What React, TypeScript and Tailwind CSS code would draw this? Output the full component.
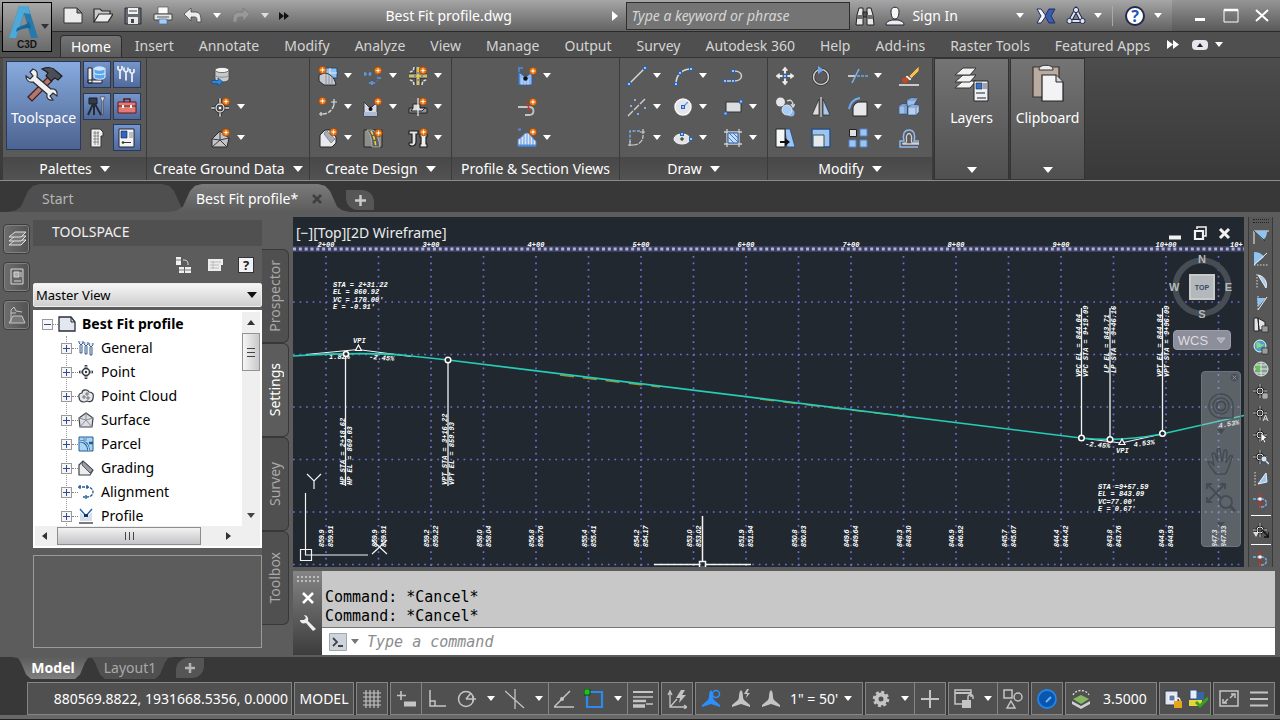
import { useState } from "react";
import type { ReactNode } from "react";

/* ---------- small shared pieces ---------- */

function Svg({ size = 20, box = 20, children }: { size?: number; box?: number; children: ReactNode }) {
    return (
        <svg width={size} height={size} viewBox={`0 0 ${box} ${box}`} fill="none" className="shrink-0" aria-hidden="true">
            {children}
        </svg>
    );
}

function Caret({ className = "text-white", wide }: { className?: string; wide?: boolean }) {
    return (
        <svg width={wide ? 10 : 8} height={wide ? 6 : 5} viewBox="0 0 8 5" preserveAspectRatio="none" className={`shrink-0 ${className}`} aria-hidden="true">
            <path d="M0 0h8L4 5z" fill="currentColor" />
        </svg>
    );
}

function Star({ x = 15, y = 4.5 }: { x?: number; y?: number }) {
    return (
        <g>
            <circle cx={x} cy={y} r="3.8" fill="#e8761a" stroke="#8a4413" strokeWidth="0.7" />
            <path d={`M${x - 2.4} ${y}h4.8M${x} ${y - 2.4}v4.8`} stroke="#ffd690" strokeWidth="1" />
            <circle cx={x} cy={y} r="1.1" fill="#fff" />
        </g>
    );
}

const grip = (x: number, y: number, k: number) => (
    <rect key={k} x={x - 1.5} y={y - 1.5} width="3" height="3" fill="#9cc4f5" stroke="#2b62b4" strokeWidth="1" />
);

/* ---------- ribbon icons ---------- */

const icons: Record<string, ReactNode> = {
    importSurvey: (
        <Svg>
            <path d="M4 4v9c0 4 14 4 14 0V4" fill="#c9c9cc" stroke="#444" strokeWidth=".8" />
            <ellipse cx="11" cy="4" rx="7" ry="2.6" fill="#f4f4f4" stroke="#555" strokeWidth=".8" />
            <path d="M4 9c1 3 13 3 14 0" stroke="#8d8d90" />
            <path d="M1 14.500h6v-2.500l5 4-5 4v-2.500H1z" fill="#2f86dd" stroke="#164a86" strokeWidth=".7" />
        </Svg>
    ),
    points: (
        <Svg>
            <path d="M9 2v4M9 15v4M1 11h4M14 11h4" stroke="#1e1e1e" strokeWidth="3" />
            <path d="M9 1.500v5M9 14.500v5M.5 11h5M13 11h5" stroke="#e8e8e8" strokeWidth="1.500" />
            <circle cx="9" cy="11" r="4" fill="#5d5d5d" stroke="#1e1e1e" strokeWidth="2.600" />
            <circle cx="9" cy="11" r="4" stroke="#e8e8e8" strokeWidth="1.300" />
            <circle cx="9" cy="11" r="1.200" fill="#fff" />
            <Star />
        </Svg>
    ),
    surfaces: (
        <Svg>
            <path d="M1 11 9 3l9 7-2 9H1z" fill="#c3c4ca" stroke="#2a2a2a" />
            <path d="M9 3v9M1 19l8-7 7 7M9 12l9-2M9 12l-8-1" stroke="#3a3a3a" />
            <Star />
        </Svg>
    ),
    parcel: (
        <Svg>
            <path d="M3 2h16v10H3z" fill="#8fc0ef" stroke="#24476f" />
            <path d="M12 2v10M12 7h7" stroke="#dbeeff" />
            <path d="M1 9l5-2c5 0 11 4 12 12H6l-5-4z" fill="#c7c9d0" stroke="#2a2a2a" />
            <path d="M8 8v11M11 9v10M14 11v8" stroke="#8c94a8" />
            <Star x={4.5} y={4} />
        </Svg>
    ),
    alignment: (
        <Svg>
            <path d="M1 8h9" stroke="#5f9be6" strokeWidth="1.500" strokeDasharray="3 1.500" />
            <path d="M2 6v4M7 6v4M14 12h4M6 17h6M9 15v4" stroke="#5f9be6" strokeWidth="1.500" />
            <path d="M12 8c4 0 4 9-1 9" stroke="#4a7fc6" strokeDasharray="2 1.500" />
            <Star />
        </Svg>
    ),
    intersection: (
        <Svg>
            <path d="M10 1v18M1 10h18" stroke="#222" strokeWidth="5" />
            <path d="M10 1v18M1 10h18" stroke="#8b8b8b" strokeWidth="4" />
            <path d="M10 1v18M1 10h18" stroke="#f1d12e" strokeWidth="1.700" strokeDasharray="5 2" />
            <path d="M6 1c0 3-2 5-5 5M14 1c0 3 2 5 5 5M6 19c0-3-2-5-5-5M14 19c0-3 2-5 5-5" stroke="#ddd" strokeWidth="1.500" strokeDasharray="3 1" />
            <Star />
        </Svg>
    ),
    profileCreate: (
        <Svg>
            <path d="M1 17h4M3 15v4M16 2v6M13 5h6" stroke="#ddd" strokeWidth="1.200" />
            <path d="M5 17c6 0 9-4 11-9" stroke="#cfcfcf" strokeWidth="1.500" strokeDasharray="4 1.500" />
            <Star x={4.5} y={4} />
        </Svg>
    ),
    assemblyCorridor: (
        <Svg>
            <path d="M1 5l5 5h3l5-5v14H1z" fill="#d4d9e6" stroke="#3c3c3c" />
            <path d="M1 15h13v4H1z" fill="#aebbd8" />
            <circle cx="7.5" cy="12" r="2" fill="#111" />
            <Star />
        </Svg>
    ),
    assembly: (
        <Svg>
            <path d="M1 11h18v5H1z" fill="#8e949e" stroke="#222" />
            <path d="M5 7h7v4h5l-3 3H3l2-3z" fill="#d9d9dc" stroke="#222" />
            <path d="M10 1v18" stroke="#eee" strokeWidth="1.200" />
            <Star />
        </Svg>
    ),
    grading: (
        <Svg>
            <path d="M2 7l5-5h5l6 7v6l-4 4H2z" fill="#e9eaed" stroke="#222" />
            <path d="M8 2l9 9-4 4-7-9z" fill="#a9adb6" stroke="#6e717a" strokeWidth=".7" />
            <Star x={15.5} y={4} />
        </Svg>
    ),
    corridor: (
        <Svg>
            <path d="M1 2h18v17H1z" fill="#8d8f8a" stroke="#222" />
            <path d="M4 2h6c4 4 6 10 7 17H9C9 12 8 7 4 2z" fill="#5c5d60" stroke="#ccc" strokeWidth=".7" />
            <path d="M8 3c3 5 4 10 5 16" stroke="#f2d22c" strokeWidth="1.600" strokeDasharray="4 1.500" />
            <Star x={15.5} y={5} />
        </Svg>
    ),
    pipes: (
        <Svg>
            <path d="M1 3h9v3H8v8c0 5-7 5-7 2v-1h3V6H1z" fill="#e2e3e6" stroke="#1f1f1f" strokeWidth="1.200" />
            <path d="M12 6h7v3h-1v7h1v3h-7v-3h1V9h-1z" fill="#eee" stroke="#1f1f1f" strokeWidth="1.200" />
            <Star x={15.5} y={4} />
        </Svg>
    ),
    profileView: (
        <Svg>
            <path d="M2 1v18M2 2h4" stroke="#4b8ee0" strokeWidth="1.500" />
            <path d="M2 6l5 4h3l5-4v13H2z" fill="#8db7ee" stroke="#2b5da4" />
            <path d="M5 12v7M8 14v5M11 13v6" stroke="#d5e6fb" strokeWidth=".8" />
            <circle cx="8.500" cy="12.500" r="2.200" fill="#111" />
            <Star x={16} y={5} />
        </Svg>
    ),
    sampleLines: (
        <Svg>
            <path d="M1 10h11c6 0 6 8 0 8H8" stroke="#c4c4c4" strokeWidth="1.800" />
            <path d="M10 6l3 8" stroke="#d1322a" strokeWidth="1.600" />
            <Star x={16} y={5} />
        </Svg>
    ),
    sectionViews: (
        <Svg>
            <path d="M1 18V11c4 0 5-6 9-6s5 6 9 8v5z" fill="#dbe7f8" stroke="#4b82cc" />
            <path d="M4 10v8M7 7v11M10 6v12M13 7v11M16 10v8" stroke="#5c95df" />
            <path d="M1 17.500h18M1 1.500h3" stroke="#4b8ee0" strokeWidth="2" />
            <Star x={16} y={4} />
        </Svg>
    ),
    line: <Svg><path d="M2 18 18 2" stroke="#d8d8d8" strokeWidth="1.400" />{[[2, 18], [18, 2]].map((p, i) => grip(p[0], p[1], i))}</Svg>,
    arc: <Svg><path d="M3 18C3 9 9 3 18 3" stroke="#d8d8d8" strokeWidth="1.500" />{[[3, 18], [7, 7], [18, 3]].map((p, i) => grip(p[0], p[1], i))}</Svg>,
    polyline: <Svg><path d="M2 15h9c10 0 10-10 0-10" stroke="#d0d0d0" strokeWidth="1.500" />{[[2, 15], [10, 15], [10, 5]].map((p, i) => grip(p[0], p[1], i))}</Svg>,
    construction: (
        <Svg>
            <path d="M1 19 19 1" stroke="#d0d0d0" strokeWidth="1.400" strokeDasharray="7 1.500" />
            <path d="M7 2h2v2H7zM3 8h2v2H3zM17 10h2v2h-2zM10 16h2v2h-2z" fill="#7fb0ee" />
        </Svg>
    ),
    circle: (
        <Svg>
            <circle cx="10" cy="10" r="8" fill="#e3e5ea" stroke="#f8f8f8" strokeWidth="1.500" />
            <path d="M10 10l5-5" stroke="#5d98e8" strokeWidth="1.200" />
            {grip(10, 10, 0)}
        </Svg>
    ),
    rectangle: <Svg><path d="M3 5h15v10H3z" fill="#dcdde1" stroke="#333" />{[[2.500, 16.500], [18, 4.500]].map((p, i) => grip(p[0], p[1], i))}</Svg>,
    fillet: (
        <Svg>
            <path d="M3 14V3h11" stroke="#79aee9" strokeWidth="1.400" strokeDasharray="3 1.500" />
            <path d="M16 1v7M13 4h6M3 13v6M1 17h6M6 17c6 0 10-4 10-9" stroke="#d0d0d0" strokeWidth="1.200" strokeDasharray="5 1" />
        </Svg>
    ),
    ellipse: <Svg><ellipse cx="9" cy="11" rx="8" ry="5" fill="#e3e3e6" stroke="#fafafa" /><path d="M9 9v4M7 11h4" stroke="#222" />{[[9, 6], [18, 11]].map((p, i) => grip(p[0], p[1], i))}</Svg>,
    hatch: (
        <Svg>
            <path d="M4 1v18M1 4h18M16 1v18M1 16h18" stroke="#d0d0d0" strokeWidth="1.300" />
            <path d="M5 5h10v10H5z" fill="#c4dcf9" stroke="#2b5ca3" />
            <path d="M5 9l6 6M6 5l9 9M10 5l5 5" stroke="#3f79cf" />
        </Svg>
    ),
    move: (
        <Svg>
            <path d="M10 0l4 5h-2.500v3h-3V5H6zM10 20l4-5h-2.500v-3h-3v3H6zM0 10l5-4v2.500h3v3H5V14zM20 10l-5-4v2.500h-3v3h3V14z" fill="#ececec" stroke="#444" strokeWidth=".7" />
            {grip(10, 10, 0)}
        </Svg>
    ),
    rotate: <Svg><circle cx="10" cy="11" r="7.500" stroke="#2e2e2e" strokeWidth="3" /><circle cx="10" cy="11" r="7.500" stroke="#c9c9c9" strokeWidth="1.600" /><path d="M7 0l6 4-6 4z" fill="#6fa8ee" /></Svg>,
    trim: <Svg><path d="M0 10h7" stroke="#e2e2e2" strokeWidth="1.600" /><path d="M9 10h11" stroke="#6fa8ee" strokeWidth="1.300" strokeDasharray="3 1" /><path d="M4 17 11 3" stroke="#7db1ef" strokeWidth="1.600" /></Svg>,
    erase: (
        <Svg>
            <path d="M0 19h20" stroke="#f0f0f0" strokeWidth="1.500" />
            <path d="M10 10 20 0v5l-8 8z" fill="#f0c15a" stroke="#6b4a14" strokeWidth=".7" />
            <path d="M8 9l5 4-2 2-5-4z" fill="#ededed" stroke="#444" strokeWidth=".7" />
            <path d="M3 13c2-2 5-2 6 0s-1 4-3 4-3-2-3-4z" fill="#c8471c" />
        </Svg>
    ),
    copy: (
        <Svg>
            <circle cx="5.500" cy="5" r="4.500" fill="#e3e5ea" />
            <path d="M12 4c4-2 6 0 6 5M16 7l2 3 2-3" stroke="#d8d8d8" strokeWidth="1.300" />
            <circle cx="16" cy="16" r="3.500" fill="#8db9ef" />
            <circle cx="12" cy="13" r="5" fill="#a9ccf5" stroke="#e8f1fd" strokeWidth=".8" />
        </Svg>
    ),
    mirror: <Svg><path d="M8 2v16H1z" fill="#dcdde1" stroke="#333" strokeWidth=".8" /><path d="M12 2v16h7z" fill="#a7c9f2" stroke="#333" strokeWidth=".8" /><path d="M10 0v20" stroke="#eee" /></Svg>,
    corner: <Svg><path d="M5 19v-7c0-4 3-7 7-7h7v14z" fill="#e6e8ec" stroke="#222" /><path d="M1 12C2 6 6 2 12 1" stroke="#72aaf0" strokeWidth="2" /></Svg>,
    explode: (
        <Svg>
            <path d="M8 3l4-2h7l-3 5-1 3H8zM0 9l3-2h5v10H0z" fill="#9fc0ea" stroke="#1f4a80" strokeWidth=".6" />
            <path d="M9 10l3-2h8v7l-3 3H9z" fill="#b9d0ee" stroke="#1f4a80" strokeWidth=".6" />
            <path d="M9 10h8l3-2M17 10v8M0 9h6l2-2M6 9v8M8 3h7l4-2" stroke="#5c7fb0" strokeWidth=".8" />
        </Svg>
    ),
    stretch: (
        <Svg>
            <path d="M10 1h5l5 18h-8z" fill="#9dc4f3" stroke="#1f4a80" strokeWidth=".8" />
            <path d="M1 1h9v18H1z" fill="#f4f5f7" stroke="#222" />
            <path d="M5 14h7" stroke="#111" strokeWidth="2" /><path d="M10 10l5 4-5 4z" fill="#111" />
        </Svg>
    ),
    scale: <Svg><path d="M1 1h18v18H1z" fill="#9fc3ef" stroke="#284f84" strokeWidth="1.400" /><path d="M2 7h11v12H2z" fill="#e7e9ed" stroke="#355" /></Svg>,
    array: (
        <Svg>
            <path d="M1.500 1.500h7v7h-7z" fill="#e0e0e3" stroke="#222" />
            <path d="M12 1h7v7h-7zM1 12h7v7H1zM12 12h7v7h-7z" fill="#9cc5f5" stroke="#4d86cb" />
        </Svg>
    ),
    offset: (
        <Svg>
            <path d="M19 19H1v-6h4c-1-3-1-5 0-8 2-4 8-4 10 0 1 3 1 5 0 8h5" stroke="#8db9f0" strokeWidth="1.500" />
            <path d="M20 16H4c-1-1 1-1 3-1 2-3-1-5 1-8 1-2 3-2 4 0 2 3-1 5 1 8h7" stroke="#d0d0d0" strokeWidth="1.300" />
        </Svg>
    ),
};

/* ---------- title bar ---------- */

function TitleBar() {
    const qat = [
        { name: "New", art: <path d="M1 4h13l5 5v10H1z M14 4v5h5" fill="#ececec" stroke="#333" transform="translate(0 -2)" /> },
        { name: "Open", art: <><path d="M1 16V3h6l2 2h8v3" fill="#c9c9c9" stroke="#2b2b2b" strokeWidth="1.200" /><path d="M1 16 6 8h14l-5 8z" fill="#ececec" stroke="#2b2b2b" strokeWidth="1.200" /></> },
        { name: "Save", art: <><path d="M2 2h16v16H2z" fill="#66696f" stroke="#2d3036" /><path d="M5 2h10v6H5z" fill="#f2f2f2" /><path d="M5 11h10v7H5z" fill="#e8e8e8" /><path d="M8 13h3v4H8z" fill="#444" /><path d="M6 5h8" stroke="#444" /></> },
        { name: "Plot", art: <><path d="M5 1h10v7H5z" fill="#fafafa" stroke="#555" strokeWidth=".7" /><path d="M1 8h18v6H1z" fill="#e4e4e4" stroke="#444" /><path d="M6 13h8v5H6z" fill="#a8cdf5" stroke="#3d6eab" strokeWidth=".7" /><path d="M4 11h12" stroke="#555" /></> },
    ];
    return (
        <header className="flex h-8 items-center border-b border-[#2a2a2a] bg-linear-to-b from-[#a6a6a6] to-[#636363] pl-[63px]">
            <div className="flex items-center gap-[10px]">
                {qat.map((q) => (
                    <button key={q.name} type="button" aria-label={q.name}>
                        <Svg>{q.art}</Svg>
                    </button>
                ))}
                <button type="button" aria-label="Undo">
                    <Svg><path d="M1 8l7-6v4h4c5 0 6 3 6 10h-4c0-4 0-5-3-5H8v4z" fill="#ececec" stroke="#444" strokeWidth=".8" /></Svg>
                </button>
                <button type="button" aria-label="Undo history"><Caret /></button>
                <button type="button" aria-label="Redo">
                    <Svg><path d="M19 8l-7-6v4H8c-5 0-6 3-6 10h4c0-4 0-5 3-5h3v4z" fill="#989898" stroke="#777" strokeWidth=".8" /></Svg>
                </button>
                <button type="button" aria-label="Redo history"><Caret className="text-[#ddd]" /></button>
                <button type="button" aria-label="Customize toolbar">
                    <svg width="10" height="8" viewBox="0 0 10 8"><path d="M0 0l5 4-5 4zM5 0l5 4-5 4z" fill="#111" /></svg>
                </button>
            </div>
            <h1 className="min-w-0 flex-1 truncate text-center text-white">Best Fit profile.dwg</h1>
            <svg width="6" height="10" viewBox="0 0 6 10" className="mr-2 ml-1" aria-hidden="true"><path d="M0 0l6 5-6 5z" fill="#fff" /></svg>
            <input
                type="text"
                aria-label="Search help"
                placeholder="Type a keyword or phrase"
                className="h-7 w-56 border border-[#2e2e2e] bg-[#747474] px-1 italic text-white placeholder:text-[#d6d6d6]"
            />
            <button type="button" aria-label="Search" className="ml-[5px]">
                <Svg>
                    <path d="M2 9 4 2h4v17H1zM18 9l-2-7h-4v17h7z" fill="#e8e8e8" stroke="#222" />
                    <path d="M8 6h4v5H8z" fill="#555" stroke="#222" /><path d="M2 9h6v4H2zM12 9h6v4h-6z" fill="#6c7077" />
                </Svg>
            </button>
            <button type="button" className="ml-[10px] flex items-center gap-[7px] text-white">
                <Svg>
                    <path d="M1 19c0-4 4-4 6-5h6c2 1 6 1 6 5z" fill="#ededed" stroke="#23283a" />
                    <path d="M6 5c0-5 8-5 8 0 0 4-1 8-4 8s-4-4-4-8z" fill="#f6f6f6" stroke="#23283a" />
                </Svg>
                Sign In
                <span className="ml-[51px]"><Caret /></span>
            </button>
            <button type="button" aria-label="Exchange Apps" className="ml-3">
                <Svg>
                    <path d="M1 3h4l5 7-5 7H1l4-7z" fill="#f4f6fb" stroke="#1f2f66" />
                    <path d="M19 3h-6l-4 7 4 7h6l-4-7z" fill="#3a5cae" stroke="#1f2f66" />
                </Svg>
            </button>
            <button type="button" aria-label="Autodesk 360" className="ml-[10px] flex items-center gap-2">
                <Svg>
                    <path d="M10 4 4 15h12z" stroke="#20294e" strokeWidth="4" /><path d="M10 4 4 15h12z" stroke="#dfe4f2" strokeWidth="2" />
                    {[[10, 4], [3.500, 15], [16.500, 15]].map(([x, y]) => <circle key={x} cx={x} cy={y} r="2.600" fill="#dfe4f2" stroke="#20294e" />)}
                </Svg>
                <Caret />
            </button>
            <span className="ml-[10px] h-5 w-px bg-[#a9a9a9]" />
            <button type="button" aria-label="Help" className="ml-3 flex items-center gap-[9px]">
                <span className="flex size-5 items-center justify-center rounded-full border-2 border-[#22294a] bg-white text-base leading-4 font-bold text-[#2457b8]">?</span>
                <Caret />
            </button>
            <div className="ml-[10px] flex h-full items-center gap-[13px] bg-[#00000018] pr-[9px] pl-[19px]">
                <button type="button" aria-label="Minimize"><Svg size={18} box={18}><path d="M4 12.500h10" stroke="#fff" strokeWidth="3" /></Svg></button>
                <button type="button" aria-label="Maximize"><Svg size={18} box={18}><path d="M2 2.500h14V15H2z" stroke="#fff" /><path d="M2 3h14" stroke="#fff" strokeWidth="2.500" /></Svg></button>
                <button type="button" aria-label="Close"><Svg size={18} box={18}><path d="M3 3l12 11M15 3L3 14" stroke="#fff" strokeWidth="2" /></Svg></button>
            </div>
        </header>
    );
}

function AppButton() {
    return (
        <button type="button" aria-label="Application menu" className="absolute top-[2px] left-[2px] z-10 size-[50px] border border-black bg-linear-to-b from-[#a8a8a8] to-[#6a6a6a]">
            <svg width="34" height="34" viewBox="0 0 34 34" className="absolute top-[2px] left-1" aria-hidden="true">
                <path d="M12 1h9l10 32h-7l-3-10-9 1-3 9H2z" fill="#2779ac" />
                <path d="M12 1h9l2 8-6-1-8 25H2z" fill="#4fa9d6" />
                <path d="M17 9l3 10-7 2z" fill="#8c8c8c" />
                <path d="M10 23c5-1 9-3 12-6l2 6c-4 0-9 0-15 4z" fill="#17669b" />
            </svg>
            <span className="absolute top-[21px] right-[2px] flex"><Caret className="text-[#333]" /></span>
            <span className="absolute bottom-0 left-0 w-full text-center font-['Liberation_Sans'] text-[10px] leading-3 font-bold text-[#151515]">C3D</span>
        </button>
    );
}

/* ---------- ribbon ---------- */

const ribbonTabs = ["Home", "Insert", "Annotate", "Modify", "Analyze", "View", "Manage", "Output", "Survey", "Autodesk 360", "Help", "Add-ins", "Raster Tools", "Featured Apps"];

type Tool = { icon: string; label: string; menu?: boolean };
type Panel = { title: string; menu?: boolean; width: string; grid: string; tools: Tool[] };

const panels: Panel[] = [
    {
        title: "Create Ground Data", menu: true, width: "w-[163px]", grid: "grid-cols-[35px]",
        tools: [
            { icon: "importSurvey", label: "Import Survey Data" },
            { icon: "points", label: "Points", menu: true },
            { icon: "surfaces", label: "Surfaces", menu: true },
        ],
    },
    {
        title: "Create Design", menu: true, width: "w-[142px]", grid: "grid-cols-[45px_45px_36px]",
        tools: [
            { icon: "parcel", label: "Parcel", menu: true },
            { icon: "alignment", label: "Alignment", menu: true },
            { icon: "intersection", label: "Intersections", menu: true },
            { icon: "profileCreate", label: "Feature Line", menu: true },
            { icon: "assemblyCorridor", label: "Profile", menu: true },
            { icon: "assembly", label: "Assembly", menu: true },
            { icon: "grading", label: "Grading", menu: true },
            { icon: "corridor", label: "Corridor" },
            { icon: "pipes", label: "Pipe Network", menu: true },
        ],
    },
    {
        title: "Profile & Section Views", width: "w-[168px]", grid: "grid-cols-[38px]",
        tools: [
            { icon: "profileView", label: "Profile View", menu: true },
            { icon: "sampleLines", label: "Sample Lines" },
            { icon: "sectionViews", label: "Section Views", menu: true },
        ],
    },
    {
        title: "Draw", menu: true, width: "w-[148px]", grid: "grid-cols-[46px_50px_38px]",
        tools: [
            { icon: "line", label: "Line", menu: true },
            { icon: "arc", label: "Arc", menu: true },
            { icon: "polyline", label: "Polyline" },
            { icon: "construction", label: "Construction Line", menu: true },
            { icon: "circle", label: "Circle", menu: true },
            { icon: "rectangle", label: "Rectangle", menu: true },
            { icon: "fillet", label: "Curve", menu: true },
            { icon: "ellipse", label: "Ellipse", menu: true },
            { icon: "hatch", label: "Hatch", menu: true },
        ],
    },
    {
        title: "Modify", menu: true, width: "w-[165px]", grid: "grid-cols-[36px_37px_51px_26px]",
        tools: [
            { icon: "move", label: "Move" },
            { icon: "rotate", label: "Rotate" },
            { icon: "trim", label: "Trim", menu: true },
            { icon: "erase", label: "Erase" },
            { icon: "copy", label: "Copy" },
            { icon: "mirror", label: "Mirror" },
            { icon: "corner", label: "Fillet", menu: true },
            { icon: "explode", label: "Explode" },
            { icon: "stretch", label: "Stretch" },
            { icon: "scale", label: "Scale" },
            { icon: "array", label: "Array", menu: true },
            { icon: "offset", label: "Offset" },
        ],
    },
];

function PanelTitle({ title, menu }: { title: string; menu?: boolean }) {
    return (
        <button type="button" className="flex h-[23px] w-full items-center justify-center gap-2 bg-linear-to-b from-[#484848] to-[#525252] whitespace-nowrap text-white">
            {title}
            {menu && <Caret wide />}
        </button>
    );
}

function PalettesPanel() {
    const small: { label: string; on: boolean; art: ReactNode }[] = [
        { label: "Prospector", on: true, art: <><path d="M1 3h4v15H1zM1 15h14v3H1z" fill="#eee" stroke="#223" /><path d="M7 3v9c0 3 11 3 11 0V3" fill="#5ba6ee" stroke="#e8f3ff" /><ellipse cx="12.500" cy="3.500" rx="5.500" ry="2.200" fill="#cfe6ff" /><path d="M7 8c1 2 10 2 11 0" stroke="#e8f3ff" /></> },
        { label: "Settings", on: true, art: <>{[0, 6, 12].map((x) => <path key={x} d={`M${x + 1} ${1 + x / 4}v3l1 1h2l1-1v-3M${x + 3} ${5 + x / 4}v9`} stroke="#f2f2f2" strokeWidth="1.700" />)}</> },
        { label: "Survey", on: true, art: <><path d="M2 2h8v6H2z" fill="#333b48" stroke="#1a1e26" /><path d="M6 8 1 19M7 8v11M8 8l6 11" stroke="#252b36" strokeWidth="2" /><path d="M13 1h5l-2 4v14h-1V5z" fill="#e6e6e6" stroke="#333" strokeWidth=".6" /></> },
        { label: "Toolbox", on: true, art: <><path d="M7 6V3h6v3" stroke="#5c1a1a" strokeWidth="1.500" /><path d="M1 6h18v11H1z" fill="#e07b78" stroke="#5c1a1a" /><path d="M1 10h18" stroke="#5c1a1a" /><path d="M5 9h2v3H5zM13 9h2v3h-2z" fill="#fff" /></> },
        { label: "Panorama", on: false, art: <><path d="M4 1h9l3 3v4h-2v11H4z" fill="#efefef" stroke="#333" /><path d="M6 5h6M6 8h6M6 11h6M6 14h6M8 3v14M11 3v14" stroke="#777" strokeWidth=".8" /></> },
        { label: "Properties", on: true, art: <><path d="M2 1h15v18H2z" fill="#f4f4f4" stroke="#1c2436" /><path d="M4 3h6v7H4z" fill="#2d66c4" stroke="#1c2436" strokeWidth=".6" /><path d="M13 4v6M15 4v6" stroke="#888" /><path d="M5 14.500h9" stroke="#333" /><circle cx="6" cy="14.500" r="1.300" fill="#333" /></> },
    ];
    return (
        <section className="flex w-36 shrink-0 flex-col border-r border-[#3b3b3b]">
            <div className="flex flex-1 gap-[2px] px-[3px] pt-[3px]">
                <button type="button" className="flex h-[89px] w-[75px] flex-col items-center border border-[#27395f] bg-linear-to-b from-[#88abdf] to-[#4c6491] pt-1 text-white">
                    <svg width="40" height="36" viewBox="0 0 40 36" aria-hidden="true">
                        <path d="M4 31 24 11l4 4L8 35z" fill="#b4766a" stroke="#3a1d1a" strokeWidth="1.200" />
                        <path d="M18 3c5-2 11-2 14 2l6 5-4 4-3-2-4 3-5-5 2-3c-2-2-4-3-6-4z" fill="#4b4e55" stroke="#1b1d22" strokeWidth="1.200" />
                        <path d="M9 3c4 1 5 4 4 8l14 12c4-1 7 2 6 7l-4-3-3 3 3 4c-4 1-7-2-6-6L9 16c-4 1-7-2-7-6l4 3 3-3-3-4z" fill="#f1f1f1" stroke="#2a2d33" strokeWidth="1.200" />
                    </svg>
                    <span className="mt-[6px]">Toolspace</span>
                </button>
                <div className="grid h-[90px] grid-cols-2 content-between gap-x-[2px]">
                    {small.map((s) => (
                        <button
                            key={s.label}
                            type="button"
                            aria-label={s.label}
                            className={`flex h-[27px] w-7 items-center justify-center ${s.on ? "border border-[#27395f] bg-linear-to-b from-[#7496cc] to-[#506a9a]" : ""}`}
                        >
                            <Svg>{s.art}</Svg>
                        </button>
                    ))}
                </div>
            </div>
            <PanelTitle title="Palettes" menu />
        </section>
    );
}

function CollapsedPanel({ label, children }: { label: string; children: ReactNode }) {
    return (
        <button type="button" className="ml-px flex w-[75px] shrink-0 flex-col items-center border border-[#333] bg-linear-to-b from-[#747474] to-[#505050] pt-1 pb-[6px] text-white">
            <svg width="40" height="40" viewBox="0 0 40 40" aria-hidden="true">{children}</svg>
            <span className="mt-[5px]">{label}</span>
            <span className="mt-auto flex"><Caret wide /></span>
        </button>
    );
}

function Ribbon() {
    const [tab, setTab] = useState<string>("Home");
    return (
        <div className="border-b border-[#8b8b8b]">
            <nav className="flex h-[25px] items-end gap-px bg-[#4f4f4f] pl-[60px]">
                {ribbonTabs.map((t) => (
                    <button
                        key={t}
                        type="button"
                        onClick={() => setTab(t)}
                        className={`h-[22px] whitespace-nowrap ${t === tab ? "rounded-t-sm border border-b-0 border-[#2c2c2c] bg-linear-to-b from-[#747474] to-[#5b5b5b] px-[10px] leading-[18px] text-white" : "px-3 leading-5 text-[#d4d4d4]"}`}
                    >
                        {t}
                    </button>
                ))}
                <button type="button" aria-label="More tabs" className="mb-2 ml-1">
                    <svg width="12" height="9" viewBox="0 0 12 9"><path d="M0 0l6 4.500L0 9zM6 0l6 4.500L6 9z" fill="#fff" /></svg>
                </button>
                <button type="button" aria-label="Minimize ribbon" className="mb-[7px] ml-3 flex h-[10px] w-4 items-center justify-center rounded-sm bg-[#e6e6ec]">
                    <svg width="6" height="4" viewBox="0 0 6 4"><path d="M0 4h6L3 0z" fill="#222" /></svg>
                </button>
                <button type="button" aria-label="Ribbon options" className="mb-[10px] ml-[6px] flex"><Caret /></button>
            </nav>
            <div className="flex h-[123px] border-t border-[#333] bg-linear-to-b from-[#4c4c4c] to-[#393939] pl-[3px]">
                <div className="flex bg-[#5a5a5a]">
                    <PalettesPanel />
                    {panels.map((p) => (
                        <section key={p.title} className={`flex shrink-0 flex-col border-r border-[#3b3b3b] ${p.width}`}>
                            <div className={`grid flex-1 auto-rows-[31px] justify-center pt-[2px] ${p.grid}`}>
                                {p.tools.map((t) => (
                                    <button key={t.label} type="button" aria-label={t.label} className="flex items-center gap-[6px]">
                                        {icons[t.icon]}
                                        {t.menu && <Caret className="text-white" />}
                                    </button>
                                ))}
                            </div>
                            <PanelTitle title={p.title} menu={p.menu} />
                        </section>
                    ))}
                </div>
                <CollapsedPanel label="Layers">
                    {[18, 12, 5].map((y) => <path key={y} d={`M3 ${y + 7}l8-7h13l-6 7z`} fill="#f2f2f2" stroke="#333" />)}
                    <path d="M22 18h14v20H22z" fill="#eef1f6" stroke="#222" />
                    <path d="M24 20h6v6h-6z" fill="#3572c8" stroke="#223" strokeWidth=".6" />
                    <path d="M32 20v6M34 20v6" stroke="#556" /><path d="M24 30h9M25 35h9" stroke="#222" />
                </CollapsedPanel>
                <CollapsedPanel label="Clipboard">
                    <path d="M5 4h26v30H5z" fill="#b9aba0" stroke="#3c332c" strokeWidth="1.200" />
                    <path d="M11 6c0-5 14-5 14 0v1H11z" fill="#ececf0" stroke="#333" />
                    <path d="M14 12h14l7 7v19H14z" fill="#f3f3f6" stroke="#222" strokeWidth="1.200" /><path d="M28 12v7h7" fill="#d3d3da" stroke="#222" />
                </CollapsedPanel>
            </div>
        </div>
    );
}

function FileTabs() {
    const shape = "[clip-path:polygon(0_100%,8px_94%,13px_80%,20px_25%,25px_6%,32px_0,calc(100%_-_32px)_0,calc(100%_-_25px)_6%,calc(100%_-_20px)_25%,calc(100%_-_13px)_80%,calc(100%_-_8px)_94%,100%_100%)]";
    return (
        <div className="flex h-8 items-end border-b border-[#5c5c5c] bg-[#383838] pl-2">
            <button type="button" className={`-mr-6 h-7 w-[186px] bg-[#4f4f4f] pt-[2px] pl-[34px] text-left text-[#b5b5b5] ${shape}`}>Start</button>
            <div className={`flex h-7 w-[180px] items-center bg-linear-to-b from-[#7b7b7b] to-[#5c5c5c] pt-[2px] pl-[26px] text-white ${shape}`}>
                <button type="button" className="whitespace-nowrap">Best Fit profile*</button>
                <button type="button" aria-label="Close drawing" className="ml-[14px]">
                    <Svg size={10} box={10}><path d="M1 1l8 8M9 1L1 9" stroke="#3f3f3f" strokeWidth="2.500" /></Svg>
                </button>
            </div>
            <button type="button" aria-label="New drawing" className="mb-[2px] -ml-1 flex h-5 w-7 items-center justify-center rounded-tr-xl rounded-bl-xl bg-[#565656]">
                <Svg size={11} box={11}><path d="M5.500 0v11M0 5.500h11" stroke="#c9c9c9" strokeWidth="2.500" /></Svg>
            </button>
        </div>
    );
}

/* ---------- toolspace ---------- */

const treeItems: { label: string; art: ReactNode }[] = [
    { label: "General", art: <>{[0, 5, 10].map((x) => <path key={x} d={`M${x + 1} ${1 + x / 5}v2l2 2 2-2V${1 + x / 5}M${x + 2} ${5 + x / 5}v8h2V${5 + x / 5}`} fill="#dfe9f5" stroke="#2a4e7e" strokeWidth=".9" />)}</> },
    { label: "Point", art: <><path d="M8 1v14M1 8h14" stroke="#333a44" strokeWidth="2.600" /><path d="M8 2v12M2 8h12" stroke="#fff" /><circle cx="8" cy="8" r="3.500" fill="#fff" stroke="#333a44" strokeWidth="1.500" /><circle cx="8" cy="8" r="1.200" fill="#333a44" /></> },
    { label: "Point Cloud", art: <><path d="M1 9c-1-3 2-4 3-4 0-4 6-4 7-1 4 0 5 3 4 6 0 4-4 4-6 3-3 2-8 1-8-4z" fill="#e5e7eb" stroke="#3c4048" strokeWidth="1.200" /><path d="M5 8h2v2H5zM8 5h2v2H8zM9 9h2v2H9z" fill="#fff" stroke="#3c4048" strokeWidth=".7" /></> },
    { label: "Surface", art: <><path d="M1 6l7-5 7 5-1 9H2z" fill="#dcdee3" stroke="#41444b" strokeWidth="1.200" /><path d="M8 1v7M8 8l7-2M8 8L1 6M8 8l-6 7M8 8l6 7" stroke="#8a8e97" /></> },
    { label: "Parcel", art: <><path d="M1 1h14v14H1z" fill="#a9d4f5" stroke="#1e5e94" /><path d="M1 5c6 0 9 3 10 10M7 1v4M15 7h-4" stroke="#1e5e94" strokeWidth="2.500" /><path d="M1 5c6 0 9 3 10 10M7 1v4" stroke="#e8f5ff" /></> },
    { label: "Grading", art: <><path d="M1 5l4-4 10 9-3 5H1z" fill="#ededf0" stroke="#3c4048" strokeWidth="1.200" /><path d="M5 1l10 9-3 3L4 5z" fill="#9a9da6" stroke="#3c4048" strokeWidth=".8" /></> },
    { label: "Alignment", art: <><path d="M0 3h9c8 0 8 10 0 10H5" stroke="#1d5c96" strokeWidth="1.300" strokeDasharray="3 1" /><path d="M2 1v4M9 1v4M8 11v4" stroke="#1d5c96" strokeWidth="1.300" /></> },
    { label: "Profile", art: <><path d="M2 4l6 6 6-6v9H2z" fill="#d4deec" /><path d="M2 1l6 7 6-7" stroke="#1f62b0" strokeWidth="1.400" /><path d="M6 6h4v3H6z" fill="#14325a" /><path d="M1 15h14" stroke="#333" strokeWidth="1.300" /></> },
];

function Expander({ open }: { open?: boolean }) {
    return (
        <span className="flex size-[11px] shrink-0 items-center justify-center border border-[#9a9a9a] bg-[#f6f6f6]">
            <Svg size={7} box={7}><path d={open ? "M0 3.500h7" : "M0 3.500h7M3.500 0v7"} stroke="#2b4a9b" /></Svg>
        </span>
    );
}

function Tree() {
    return (
        <div className="h-[238px] overflow-hidden border-2 border-white bg-white text-black">
            <div className="flex h-[214px]">
                <div className="min-w-0 flex-1">
                    <button type="button" className="flex h-6 w-full items-center pl-[7px] font-bold whitespace-nowrap">
                        <Expander open />
                        <span className="w-[5px] border-t border-dotted border-[#888]" />
                        <Svg size={18} box={18}><path d="M1 2h12l4 5v9H1z" fill="#e3e7ef" stroke="#2b2f38" strokeWidth="1.300" /><path d="M13 2v5h4" stroke="#2b2f38" /></Svg>
                        <span className="ml-[6px]">Best Fit profile</span>
                    </button>
                    <ul className="ml-[31px] border-l border-dotted border-[#999]">
                        {treeItems.map((item) => (
                            <li key={item.label}>
                                <button type="button" className="-ml-[6px] flex h-6 items-center whitespace-nowrap">
                                    <Expander />
                                    <span className="w-[6px] border-t border-dotted border-[#888]" />
                                    <Svg size={16} box={16}>{item.art}</Svg>
                                    <span className="ml-[7px]">{item.label}</span>
                                </button>
                            </li>
                        ))}
                    </ul>
                </div>
                <div className="flex w-[18px] flex-col items-center bg-[#efefef] pt-2 pb-2">
                    <svg width="8" height="5" viewBox="0 0 8 5"><path d="M0 5h8L4 0z" fill="#333" /></svg>
                    <span className="mt-2 flex h-[38px] w-full flex-col items-center justify-center gap-[3px] border border-[#949494] bg-linear-to-r from-[#f6f6f6] to-[#c9c9cc]">
                        {[0, 1, 2].map((n) => <i key={n} className="h-px w-2 bg-[#444]" />)}
                    </span>
                    <Caret className="mt-auto text-[#444]" />
                </div>
            </div>
            <div className="flex h-5 items-center bg-[#efefef] pl-[7px]">
                <svg width="5" height="8" viewBox="0 0 5 8"><path d="M5 0v8L0 4z" fill="#333" /></svg>
                <span className="ml-[10px] flex h-[18px] w-36 items-center justify-center gap-[3px] border border-[#8e8e8e] bg-linear-to-b from-[#f2f2f2] to-[#c4c4c8]">
                    {[0, 1, 2].map((n) => <i key={n} className="h-2 w-px bg-[#444]" />)}
                </span>
                <svg width="5" height="8" viewBox="0 0 5 8" className="ml-[25px]"><path d="M0 0v8l5-4z" fill="#333" /></svg>
            </div>
        </div>
    );
}

function Toolspace() {
    const [tab, setTab] = useState<string>("Settings");
    return (
        <aside className="flex shrink-0 pt-[7px] pl-[3px]">
            <div className="flex w-[30px] flex-col gap-2 pt-1">
                {[
                    <g key="a">{[10, 6, 2].map((y) => <path key={y} d={`M2 ${y + 6}l6-5h11l-5 5z`} fill="#777" stroke="#e0e0e0" />)}</g>,
                    <g key="b" stroke="#d6d6d6"><path d="M4 2h12v15H4z" fill="#666" /><path d="M7 5h5v5H7z" fill="#aaa" /><path d="M14 5v5M7 14h7" /></g>,
                    <g key="c" stroke="#c4c4c4"><path d="M2 18h16l-3-7H6z" fill="#777" /><path d="M4 17V5l3-3 2 4 6 1M4 8h5" /></g>,
                ].map((art, i) => (
                    <button key={i} type="button" aria-label={["Layers palette", "Properties palette", "Tool palette"][i]} className="flex h-[30px] w-[27px] items-center justify-center rounded-sm border border-[#3d3d3d] bg-linear-to-r from-[#6e6e6e] to-[#525252] inset-ring inset-ring-[#808080]">
                        <Svg>{art}</Svg>
                    </button>
                ))}
            </div>
            <div className="w-[229px]">
                <h2 className="h-[26px] bg-[#505050] pl-[19px] leading-6 text-[#f0f0f0]">TOOLSPACE</h2>
                <div className="flex h-[37px] items-center justify-end gap-[14px] pr-2">
                    <button type="button" aria-label="Toggle preview"><Svg size={18} box={18}><path d="M2 1h5v8H2zM5 11h5v6H5zM11 11h6v6h-6z" fill="#f0f0f0" /><path d="M2 4h5M5 14h12M9 4c4 0 5 1 5 5" stroke="#777" /><path d="M9 4c4 0 5 1 5 5" stroke="#ddd" /></Svg></button>
                    <button type="button" aria-label="Panorama display"><Svg size={18} box={18}><path d="M2 3h15v6h-2v6H2z" fill="#ececec" /><path d="M4 6h11M4 9h9M4 12h9M7 5v8" stroke="#aaa" strokeWidth=".7" /></Svg></button>
                    <button type="button" aria-label="Toolspace help" className="size-4 border border-[#333] bg-[#f2f2f6] text-center text-[13px] leading-[14px] font-bold text-[#222]">?</button>
                </div>
                <div className="relative text-[13px]">
                    <select aria-label="View" className="h-6 w-full appearance-none rounded-xs border border-[#eee] bg-linear-to-b from-[#f6f6f6] to-[#cfcfcf] pl-[2px] text-black">
                        <option>Master View</option>
                        <option>Active Drawing View</option>
                    </select>
                    <svg width="10" height="6" viewBox="0 0 10 6" className="pointer-events-none absolute top-[9px] right-[5px]"><path d="M0 0h10L5 6z" fill="#111" /></svg>
                </div>
                <div className="mt-[3px]"><Tree /></div>
                <div className="mt-[7px] h-[93px] border border-[#9b9b9b]" />
            </div>
            <div className="mr-1 flex w-[27px] flex-col pt-[29px]">
                {["Prospector", "Settings", "Survey", "Toolbox"].map((t) => (
                    <button
                        key={t}
                        type="button"
                        onClick={() => setTab(t)}
                        className={`flex h-[94px] items-center justify-center rounded-r-md border border-l-0 border-[#383838] ${t === tab ? "bg-[#5c5c5c] text-white" : "bg-[#505050] text-[#a9a9a9]"}`}
                    >
                        <span className="rotate-180 [writing-mode:vertical-rl]">{t}</span>
                    </button>
                ))}
            </div>
        </aside>
    );
}

/* ---------- drawing ---------- */

const step = 52.5;
const elevations = [
    ["859.9", "859.91"], ["859.9", "859.91"], ["859.2", "859.22"], ["858.0", "858.04"], ["856.8", "856.76"], ["855.4", "855.41"],
    ["854.2", "854.17"], ["853.0", "853.02"], ["851.9", "851.94"], ["850.8", "850.83"], ["849.6", "849.64"], ["848.3", "848.30"],
    ["846.9", "846.92"], ["845.7", "845.67"], ["844.4", "844.42"], ["843.8", "843.76"], ["844.9", "844.93"], ["847.3", "847.33"],
];

// vertical callouts: leader x, first baseline y, [left text, right text]
const callouts: [number, number, string, string][] = [
    [346, 485, "HP STA = 2+18.62", "HP EL = 860.03"],
    [448, 485, "VPT STA = 3+16.22", "VPT EL = 859.93"],
    [1081.5, 377, "VPC EL = 844.04", "VPC STA = 9+19.09"],
    [1110, 373, "LP EL = 843.71", "LP STA = 9+46.16"],
    [1162.5, 377, "VPT EL = 844.84", "VPT STA = 9+96.09"],
];

function Drawing() {
    const mono = "font-['Liberation_Mono'] text-[7px] font-bold italic";
    const rows = [302, 354.5, 407, 459.5, 512, 564.5];
    return (
        <svg className="absolute inset-0 size-full" aria-label="Profile view">
            <g transform="translate(-293 -217)">
                <g stroke="#6f6fd0" strokeWidth="1.700" strokeDasharray="1.700 4.860">
                    {rows.map((y) => <path key={y} d={`M293 ${y}H2600`} />)}
                    {elevations.map((_, i) => <path key={i} d={`M${326 + i * step} 256V568`} />)}
                </g>
                <path d="M293 249H2600" stroke="#5a598a" strokeWidth="6" opacity=".45" />
                <path d="M293 249H2600" stroke="#b0afe4" strokeWidth="3" strokeDasharray="3 2.830" />

                <g fill="#fff" className={mono}>
                    {["2+00", "3+00", "4+00", "5+00", "6+00", "7+00", "8+00", "9+00", "10+00"].map((s, i) => (
                        <text key={s} x={326 + i * step * 2} y="247" textAnchor="middle">{s}</text>
                    ))}
                    <text x="1230" y="247">10+</text>
                    {["STA = 2+31.22", "EL = 860.92", "VC = 170.00'", "E = -0.91'"].map((s, i) => <text key={s} x="333" y={286.5 + i * 7.500}>{s}</text>)}
                    {["STA =9+57.59", "EL = 843.09", "VC=77.00'", "E = 0.67'"].map((s, i) => <text key={s} x="1098" y={488.5 + i * 7.500}>{s}</text>)}
                    <text x="353" y="343">VPI</text>
                    <text x="1116" y="453">VPI</text>
                    <text x="329" y="359">1.82%</text>
                    <text transform="translate(369 359) rotate(4)">-2.45%</text>
                    <text transform="translate(1085 446) rotate(5)">-2.45%</text>
                    <text transform="translate(1134 447) rotate(-8)">4.53%</text>
                    <text transform="translate(1219 428) rotate(-10)">4.53%</text>
                    {callouts.map(([x, y, a, b]) => (
                        <g key={x}>
                            <text transform={`translate(${x - 1} ${y}) rotate(-90)`}>{a}</text>
                            <text transform={`translate(${x + 6} ${y}) rotate(-90)`}>{b}</text>
                        </g>
                    ))}
                </g>
                <g fill="#fff" className="font-['Liberation_Sans'] text-[7px] font-bold italic">
                    {elevations.map(([a, b], i) => (
                        <g key={i}>
                            <text transform={`translate(${324 + i * step} 547) rotate(-90)`}>{a}</text>
                            <text transform={`translate(${333 + i * step} 547) rotate(-90)`}>{b}</text>
                        </g>
                    ))}
                </g>

                <g fill="none" stroke="#f2f2f2" strokeWidth="1.300">
                    <path d="M345.500 354V486M448 363V486" />
                    <path d="M1081.500 308V435M1110 308V437M1162.500 308V431" />
                    <path d="M306 354.500L358 349.500L411 356.500M1081 438L1121 443L1162 434" strokeWidth="1.200" />
                </g>
                <path d="M560 375L660 387M760 399L910 417" stroke="#a88d2c" strokeWidth="1.500" strokeDasharray="14 9" fill="none" />
                <path d="M293 356C340 353 385 353 411 356L448 360L1081 438Q1120 442 1162 434L1244 415.500L1500 357" stroke="#25cdb4" strokeWidth="1.700" fill="none" />
                <g fill="#212830" stroke="#fff" strokeWidth="1.500">
                    <circle cx="346" cy="354" r="2.500" />
                    <circle cx="448" cy="360" r="2.800" />
                    <circle cx="1081.500" cy="438" r="2.800" />
                    <circle cx="1110" cy="439.500" r="2.800" />
                    <circle cx="1162.500" cy="433.500" r="2.800" />
                    <path d="M358.500 345l3 5.500h-6zM1122 439l3 5.500h-6z" strokeWidth="1.200" />
                </g>

                {/* UCS icon and crosshair */}
                <g fill="none" stroke="#f4f4f4" strokeWidth="1.200">
                    <path d="M300.500 549.500h11v11h-11zM305.500 493V555H368M307 474l7 7 7-7M314 481v8M372 540l15 14M387 540l-15 14" />
                    <path d="M702.500 516V561M654 564.500H699M706 564.500H751M699.500 561.500h6v6h-6z" strokeWidth="1.500" />
                </g>
            </g>
        </svg>
    );
}

function ViewCube() {
    return (
        <div className="absolute top-9 right-3 flex w-[60px] flex-col items-center font-['Liberation_Sans'] text-[11px] leading-[11px] font-bold text-[#b5b8bb]">
            <div className="relative mt-1 flex size-[60px] items-center justify-center">
                <svg width="60" height="60" viewBox="0 0 60 60" className="absolute inset-0"><circle cx="30" cy="30" r="26.500" stroke="#474d54" strokeWidth="6" fill="none" /></svg>
                <span className="absolute top-[-3px]">N</span>
                <span className="absolute bottom-[-3px]">S</span>
                <span className="absolute left-[-3px]">W</span>
                <span className="absolute right-0">E</span>
                <button type="button" className="relative size-[26px] border-2 border-[#c9c9c9] bg-[#b3b8bd] text-[7px] text-[#3c4a5b]">TOP</button>
            </div>
            <button type="button" className="mt-[13px] flex h-5 w-[58px] items-center justify-center gap-2 rounded-sm border border-[#9a9cab] bg-[#8c8e99] text-[13px] font-normal text-[#dcdce2]">
                WCS
                <svg width="10" height="7" viewBox="0 0 10 7"><path d="M1 1h8L5 6z" fill="#a9abb5" stroke="#c3c4cc" /></svg>
            </button>
        </div>
    );
}

function NavBar() {
    return (
        <div className="absolute top-[154px] right-[3px] flex h-[176px] w-10 flex-col items-center rounded-sm border border-[#6d7379] bg-[#b4b9bf]/40 text-[#454b52]">
            <button type="button" aria-label="Close navigation bar" className="self-end p-px"><Svg size={9} box={10}><circle cx="5" cy="5" r="4.500" fill="#4c5259" /><path d="M3 3l4 4M7 3L3 7" stroke="#8e9399" /></Svg></button>
            <button type="button" aria-label="Steering wheel" className="mt-2">
                <Svg size={30} box={30}><path d="M3 15a12 12 0 1 1 24 0v12H15A12 12 0 0 1 3 15z" stroke="currentColor" strokeWidth="1.500" /><circle cx="15" cy="15" r="8" stroke="currentColor" strokeWidth="1.500" /><circle cx="15" cy="15" r="4.500" stroke="currentColor" strokeWidth="2" /></Svg>
            </button>
            <Caret className="mt-2 text-[#454b52]" />
            <button type="button" aria-label="Pan" className="mt-3">
                <Svg size={30} box={30}><path d="M10 28c-3-4-6-7-8-12 2-1 4 0 6 4L6 8c1-2 3-1 3 0l3 8-1-12c1-2 3-2 3 0l2 12 2-11c1-2 3-1 3 1l-1 11 4-7c2-1 3 0 2 2-3 6-3 12-7 16z" stroke="currentColor" strokeWidth="1.500" /></Svg>
            </button>
            <button type="button" aria-label="Zoom extents" className="mt-[6px]">
                <Svg size={32} box={32}><path d="M2 2l18 18M20 2L2 20M2 7V2h5M15 2h5v5M2 15v5h5" stroke="currentColor" strokeWidth="1.800" /><circle cx="21" cy="20" r="6" fill="#5e646b" stroke="currentColor" strokeWidth="1.800" /><path d="M25 24l5 5" stroke="currentColor" strokeWidth="3" /></Svg>
            </button>
            <Caret className="mt-2 text-[#454b52]" />
        </div>
    );
}

function Viewport() {
    return (
        <main className="relative min-w-0 flex-1 overflow-hidden bg-[#212830]">
            <Drawing />
            <p className="absolute top-[6px] left-[3px] leading-5 text-[#ececec]">[−][Top][2D Wireframe]</p>
            <div className="absolute top-[9px] right-[13px] flex gap-[10px]">
                <button type="button" aria-label="Minimize viewport"><Svg size={14} box={14}><path d="M0 11.500h12" stroke="#f2f2f2" strokeWidth="4" /></Svg></button>
                <button type="button" aria-label="Restore viewport"><Svg size={14} box={14}><path d="M4 3V1h9v9h-2" stroke="#f2f2f2" strokeWidth="1.600" /><path d="M2 5h8v8H2z" stroke="#f2f2f2" strokeWidth="2.200" /></Svg></button>
                <button type="button" aria-label="Close viewport"><Svg size={14} box={14}><path d="M3 3l9 9M12 3l-9 9" stroke="#f2f2f2" strokeWidth="3" /></Svg></button>
            </div>
            <ViewCube />
            <NavBar />
        </main>
    );
}

/* ---------- right-hand toolbar ---------- */

const cross = (
    <>
        <path d="M7 1v4M7 11v4M0 8h4M10 8h4" stroke="#161616" strokeWidth="2.500" />
        <path d="M7 1v4M7 11v4M0 8h4M10 8h4" stroke="#eee" />
        <circle cx="7" cy="8" r="3" stroke="#161616" strokeWidth="2.500" />
        <circle cx="7" cy="8" r="3" stroke="#eee" />
    </>
);
const curve = <><path d="M0 6h9c6 0 6 8 0 8H6" stroke="#7fb2ee" strokeWidth="1.300" strokeDasharray="3 1" /><path d="M7 0v15" stroke="#cf2b25" strokeWidth="1.500" /><path d="M5.500 4.500h3v3h-3z" fill="#fff" /></>;

const sideTools: { label: string; art: ReactNode }[] = [
    { label: "Angle", art: <><path d="M1 2h15M1 2v13" stroke="#eee" /><path d="M1 2l9 9c3-2 4-5 4-9z" fill="#8fc4f2" /><path d="M1 2l11 10" stroke="#333" /></> },
    { label: "Bearing", art: <><path d="M1 14h15" stroke="#ddd" strokeDasharray="1.500 1.500" /><path d="M1 1c5 0 8 2 10 5L1 14z" fill="#8fc4f2" /><path d="M1 14L14 2" stroke="#eee" /></> },
    { label: "Azimuth", art: <><path d="M4 1v15" stroke="#ddd" strokeDasharray="1.500 1.500" /><path d="M5 2c6 1 10 7 8 13z" fill="#a8cdf3" stroke="#eee" /></> },
    { label: "Deflection", art: <><path d="M5 1v15" stroke="#ddd" strokeDasharray="1.500 1.500" /><path d="M4 3h9L5 12z" fill="#8fc4f2" /><path d="M5 15L14 2" stroke="#eee" /></> },
    { label: "Station offset", art: <><path d="M1 1h4l1 13H1zM5 1l7 4v8H6z" fill="#e4e4e8" stroke="#222" /><path d="M9 9h6v6H9z" fill="#eee" stroke="#333" /><path d="M11 9v6M13 9v6M9 11h6M9 13h6" stroke="#333" strokeWidth=".5" /></> },
    { label: "Latitude longitude", art: <><circle cx="7" cy="7" r="6" fill="#4ea0c9" stroke="#dff" /><path d="M3 4c4-3 4 3 8 1-1 4-5 2-7 5z" fill="#8fd08a" /><path d="M9 9h6v6H9z" fill="#eee" stroke="#333" /><path d="M11 9v6M13 9v6M9 11h6M9 13h6" stroke="#333" strokeWidth=".5" /></> },
    { label: "Grid", art: <><circle cx="8" cy="8" r="7" fill="#7ea08c" stroke="#e6e6e6" /><path d="M1 8h14M8 1v14M3 4h10M3 12h10" stroke="#e6e6e6" /><path d="M3 5h4v4H3z" fill="#5ecb3b" /></> },
    { label: "Point number", art: <>{cross}<path d="M9 12h6M9 14h6M11 10v6M13 10v6" stroke="#ddd" strokeWidth=".8" /></> },
    { label: "Point name", art: <>{cross}<path d="M10 16l2.500-6 2.500 6M11 14h3" stroke="#ddd" strokeWidth="1" /></> },
    { label: "Point object", art: <>{cross}<path d="M8 6l6 5-3 1 2 3-2 1-1-3-2 2z" fill="#fff" stroke="#222" strokeWidth=".6" /></> },
    { label: "Zoom to point", art: <>{cross}<circle cx="11" cy="10" r="3" fill="#cfe3fa" stroke="#333" strokeWidth=".7" /><path d="M13 12l3 3" stroke="#ddd" strokeWidth="1.500" /></> },
    { label: "Side shot", art: <><path d="M2 1v14" stroke="#ddd" strokeDasharray="1.500 1.500" /><path d="M5 13L13 2l1 9z" fill="#9cc8f1" stroke="#eee" /></> },
    { label: "Station", art: curve },
];

function SideToolbar() {
    return (
        <div className="ml-1 flex w-[25px] flex-col items-center gap-[6px] overflow-hidden border-x border-[#393939] bg-[#575757]">
            <span className="mt-[2px] h-1 w-4 shrink-0 border-y border-dotted border-[#222]" />
            {sideTools.map((t) => (
                <button key={t.label} type="button" aria-label={t.label}><Svg size={16} box={16}>{t.art}</Svg></button>
            ))}
            <i className="h-px w-5 shrink-0 bg-white" />
            <button type="button" aria-label="Transparent point filter"><Svg size={16} box={16}>{cross}<path d="M0 10h6l-3 5z" fill="#ddd" /><path d="M9 8l7 7v-5M16 15h-5" stroke="#111" strokeWidth="1.500" /></Svg></button>
            <i className="h-px w-5 shrink-0 bg-white" />
            <button type="button" aria-label="Profile station"><Svg size={16} box={16}>{curve}</Svg></button>
        </div>
    );
}

/* ---------- command line ---------- */

function CommandLine() {
    return (
        <div className="mt-1 mr-[5px] mb-[2px] flex h-[84px]">
            <div className="flex w-[29px] flex-col items-center gap-[10px] bg-linear-to-b from-[#858585] to-[#3d3d3d] pt-[5px]">
                <span className="flex h-[6px] w-[22px] flex-col justify-between">
                    <i className="border-t-2 border-dotted border-[#bdbdbd]" />
                    <i className="border-t-2 border-dotted border-[#bdbdbd]" />
                </span>
                <button type="button" aria-label="Close command line"><Svg size={12} box={12}><path d="M1 1l10 10M11 1L1 11" stroke="#fff" strokeWidth="2.500" /></Svg></button>
                <button type="button" aria-label="Command settings"><Svg size={18} box={18}><path d="M1 6c0 3 3 4 6 3l7 8 3-2-8-8c1-3-1-6-4-6l2 3-2 2z" fill="#eee" /></Svg></button>
            </div>
            <div className="flex min-w-0 flex-1 flex-col font-['DejaVu_Sans_Mono'] text-[15px]">
                <div className="flex-1 bg-[#c8c8c8] pt-[17px] pl-[3px] leading-[19px] text-black">
                    <p>Command: *Cancel*</p>
                    <p>Command: *Cancel*</p>
                </div>
                <div className="flex h-7 items-center border-t border-[#777] bg-white pl-[7px]">
                    <button type="button" aria-label="Recent commands" className="flex items-center gap-1">
                        <Svg size={18} box={18}><path d="M.5.5h17v17H.5z" fill="#cfd3db" stroke="#9aa" /><path d="M4 5l4 4-4 4M9 13h5" stroke="#444" strokeWidth="1.800" /></Svg>
                        <Caret className="text-[#777]" />
                    </button>
                    <input type="text" aria-label="Command" placeholder="Type a command" className="ml-2 h-full min-w-0 flex-1 italic text-black outline-none placeholder:text-[#8c8c8c]" />
                </div>
            </div>
        </div>
    );
}

/* ---------- layout tabs and status bar ---------- */

function LayoutTabs() {
    const shape = "[clip-path:polygon(0_0,6px_5%,9px_25%,14px_80%,19px_100%,calc(100%_-_19px)_100%,calc(100%_-_14px)_80%,calc(100%_-_9px)_25%,calc(100%_-_6px)_5%,100%_0)]";
    return (
        <div className="flex h-[25px] items-start bg-[#383838] pl-3">
            <button type="button" className={`h-[22px] w-[82px] bg-linear-to-b from-[#5c5c5c] to-[#808080] font-bold text-white ${shape}`}>Model</button>
            <button type="button" className={`-ml-2 h-[22px] w-[88px] bg-[#505050] text-[#a9a9a9] ${shape}`}>Layout1</button>
            <button type="button" aria-label="New layout" className="mt-px ml-[2px] flex h-5 w-7 items-center justify-center rounded-tl-xl rounded-br-xl bg-[#555]">
                <Svg size={10} box={10}><path d="M5 0v10M0 5h10" stroke="#b4b4b4" strokeWidth="2.500" /></Svg>
            </button>
        </div>
    );
}

function StatusGroup({ children, className = "" }: { children: ReactNode; className?: string }) {
    return <div className={`flex h-full shrink-0 items-center border border-[#858585] bg-[#505050] ${className}`}>{children}</div>;
}

function StatusButton({ label, children, menu, width = "w-[30px]" }: { label: string; children: ReactNode; menu?: boolean; width?: string }) {
    return (
        <button type="button" aria-label={label} className={`flex h-full items-center ${menu ? "gap-[10px] pl-[5px]" : "justify-center"} ${width}`}>
            <Svg>{children}</Svg>
            {menu && <Caret />}
        </button>
    );
}

function StatusBar() {
    const g = "#c4c4c4";
    const tripod = "M10 1c3 3 1 7 3 10l6 5v2l-9-3-9 3v-2l6-5c2-3 0-7 3-10z";
    return (
        <footer className="flex h-[33px] gap-[2px] bg-[#383838] pr-[5px] pl-[27px] text-white">
            <StatusGroup className="min-w-0 flex-1 justify-end pr-[3px]"><span className="whitespace-nowrap">880569.8822, 1931668.5356, 0.0000</span></StatusGroup>
            <StatusGroup><button type="button" className="w-[58px] text-center">MODEL</button></StatusGroup>
            <StatusGroup><StatusButton label="Grid"><path d="M4 1v18M8 1v18M12 1v18M16 1v18M1 4h18M1 8h18M1 12h18M1 16h18" stroke={g} strokeWidth="1.200" /></StatusButton></StatusGroup>
            <StatusGroup>
                <StatusButton label="Dynamic input"><path d="M5 2v9M1 6.500h9" stroke={g} strokeWidth="1.600" /><path d="M8 12.500h12v5H8z" fill={g} /></StatusButton>
                <i className="h-full w-px bg-[#858585]" />
                <StatusButton label="Ortho"><path d="M3 1v16h16M3 12h5v5" stroke={g} strokeWidth="1.500" /></StatusButton>
                <StatusButton label="Polar tracking" menu width="w-12"><circle cx="9" cy="10" r="7.500" stroke={g} strokeWidth="1.500" /><path d="M9 10h10M9 10l5-6M16 7v6" stroke={g} strokeWidth="1.500" /></StatusButton>
                <StatusButton label="Isometric drafting" menu width="w-12"><path d="M0 2l19 17M10 0v20" stroke={g} strokeWidth="1.300" /></StatusButton>
                <i className="h-full w-px bg-[#858585]" />
                <StatusButton label="Snap tracking"><path d="M0 18h20M0 18L16 2" stroke={g} strokeWidth="1.500" /><circle cx="8" cy="10" r="2" fill={g} /></StatusButton>
                <StatusButton label="Object snap" menu width="w-12"><path d="M3 3h15v15H3z" stroke="#2b8af2" strokeWidth="2.200" /><path d="M0 0h6v6H0z" fill="#1ec41e" stroke="#064a06" /></StatusButton>
                <i className="h-full w-px bg-[#858585]" />
                <StatusButton label="Lineweight"><path d="M0 3h20" stroke={g} strokeWidth="2" /><path d="M0 8h20" stroke={g} strokeWidth="1.500" /><path d="M0 12h13" stroke={g} strokeWidth="2.500" /><path d="M0 17h12" stroke={g} strokeWidth="3.500" /><path d="M13 15h7" stroke={g} strokeWidth="1.500" /></StatusButton>
            </StatusGroup>
            <StatusGroup><StatusButton label="Dynamic UCS"><path d="M3 4v14h16M1 6l2-4 2 4M17 16l3 2-3 2M3 18l7-8" stroke={g} strokeWidth="1.300" /><path d="M14 1l-5 8h4l-1 5 7-8h-4l3-5z" fill={g} /></StatusButton></StatusGroup>
            <StatusGroup>
                <StatusButton label="Annotation visibility"><path d={tripod} fill="#2b90ff" /><circle cx="15" cy="5" r="3.500" stroke="#2b90ff" strokeWidth="1.500" /></StatusButton>
                <StatusButton label="Auto scale"><path d={tripod} fill={g} /><path d="M16 0l-3 5h3l-1 4 4-5h-3l2-4z" fill={g} /></StatusButton>
                <StatusButton label="Annotation scale icon"><path d={tripod} fill={g} /></StatusButton>
                <button type="button" className="flex w-[76px] items-center gap-[6px] pl-1 whitespace-nowrap">1" = 50' <Caret /></button>
            </StatusGroup>
            <StatusGroup>
                <StatusButton label="Workspace" menu width="w-12"><circle cx="10" cy="10" r="4.500" stroke={g} strokeWidth="4" /><circle cx="10" cy="10" r="7" stroke={g} strokeWidth="2.500" strokeDasharray="3 2.498" /></StatusButton>
                <i className="h-full w-px bg-[#858585]" />
                <StatusButton label="Annotation monitor"><path d="M10 1v18M1 10h18" stroke={g} strokeWidth="2" /></StatusButton>
            </StatusGroup>
            <StatusGroup>
                <StatusButton label="Lock interface" menu width="w-12"><path d="M8 15H1V1h16v7" stroke={g} strokeWidth="1.500" /><path d="M1 4h16" stroke={g} strokeWidth="2" /><path d="M8 11h9v8H8z" fill={g} /><path d="M14 11V8c0-3 5-3 5 0v2" stroke={g} strokeWidth="1.500" /></StatusButton>
                <i className="h-full w-px bg-[#858585]" />
                <StatusButton label="Isolate objects"><path d="M1 1h8v8H1zM8 12l4 7H4z" stroke={g} strokeWidth="1.500" /><circle cx="15" cy="8" r="4" stroke={g} strokeWidth="1.500" /></StatusButton>
            </StatusGroup>
            <StatusGroup><StatusButton label="Graphics performance"><circle cx="10" cy="10" r="9" fill="#0a56ad" stroke="#1e86f0" strokeWidth="1.800" /><path d="M9 13l5-5" stroke="#6ab4ff" strokeWidth="2" /></StatusButton></StatusGroup>
            <StatusGroup>
                <StatusButton label="Elevation"><path d="M2 10l8-4 8 4-8 5z" fill="#86b860" /><path d="M1 12l9 5 9-5v3l-9 5-9-5z" fill="#cfcfcf" /><path d="M2 6c3-6 13-6 16 0" stroke="#ddd" strokeWidth="1.300" strokeDasharray="2 1.500" /></StatusButton>
                <button type="button" className="w-[60px] pl-[7px] text-left">3.5000</button>
            </StatusGroup>
            <StatusGroup>
                <StatusButton label="Drawing lock" width="w-[25px]"><path d="M2 2h13v14H2z" fill="#dfe4ee" stroke="#2f3a52" /><path d="M6 6h6v6H6z" fill="#5e77a8" stroke="#fff" /><path d="M11 12h8v7h-8z" fill="#e6a417" /><path d="M13 12c0-4 4-4 4 0" stroke="#eee" strokeWidth="1.300" /></StatusButton>
                <StatusButton label="Coordinate system" width="w-[25px]"><path d="M2 1h7v9H2z" fill="#e6eefa" stroke="#2f4f86" /><path d="M9 3h7v8H9z" fill="#38679f" /><path d="M1 11h13v6H1z" fill="#e8d53c" /><path d="M8 13l4 4 8-8" stroke="#32a322" strokeWidth="3" /></StatusButton>
            </StatusGroup>
            <StatusGroup>
                <StatusButton label="Clean screen"><path d="M1 2h18v15H1z" stroke={g} strokeWidth="1.500" /><path d="M11 9l4-4M12 5h4v4M9 10l-4 4M4 10v4h4" stroke={g} strokeWidth="1.500" /></StatusButton>
                <StatusButton label="Customization"><path d="M1 3.500h18M1 10h18M1 16.500h18" stroke={g} strokeWidth="2" /></StatusButton>
            </StatusGroup>
        </footer>
    );
}

export default function App() {
    return (
        <div className="relative flex min-h-screen flex-col overflow-hidden border-b border-[#222] bg-[#5c5c5c] font-['Noto_Sans','Open_Sans',sans-serif] text-sm leading-5">
            <AppButton />
            <TitleBar />
            <Ribbon />
            <FileTabs />
            <div className="flex min-h-0 flex-1">
                <Toolspace />
                <div className="flex min-w-0 flex-1 flex-col pt-1">
                    <div className="flex min-h-0 flex-1 pr-[7px]">
                        <Viewport />
                        <SideToolbar />
                    </div>
                    <CommandLine />
                </div>
            </div>
            <LayoutTabs />
            <StatusBar />
            <div className="h-1 bg-[#686868]" />
        </div>
    );
}
